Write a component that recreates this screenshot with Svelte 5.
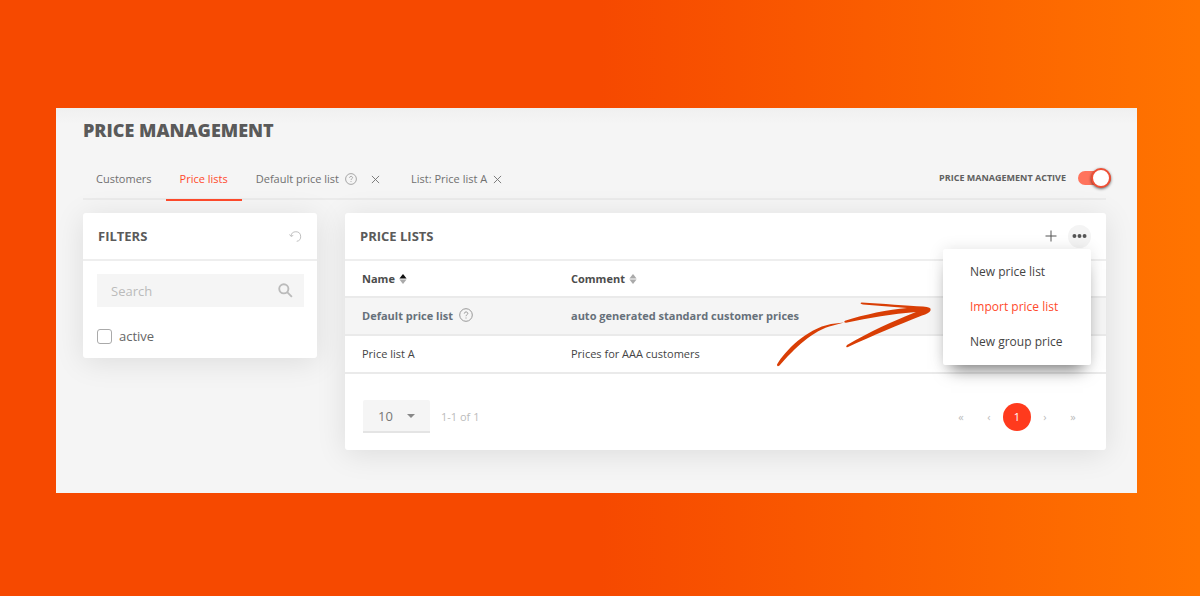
<script>
  const tabs = [
    { label: 'Customers' },
    { label: 'Price lists' },
    { label: 'Default price list', help: true, closable: true },
    { label: 'List: Price list A', closable: true },
  ];
  const menuItems = ['New price list', 'Import price list', 'New group price'];
  const rows = [
    { name: 'Default price list', comment: 'auto generated standard customer prices', standard: true },
    { name: 'Price list A', comment: 'Prices for AAA customers' },
  ];

  let activeTab = 1;
  let activeItem = 1;
  let menuOpen = true;
  let managementActive = true;
  let search = '';
  let onlyActive = false;
  let pageSize = 10;

  const resetFilters = () => {
    search = '';
    onlyActive = false;
  };
</script>

{#snippet helpIcon()}
  <svg class='help' viewBox='0 0 14 14' aria-hidden='true'>
    <circle cx='7' cy='7' r='6.3' />
    <path d='M5.3 5.6c0-2.2 3.5-2.2 3.5-.1 0 1.2-1.8 1.3-1.8 2.7M7 9.5v1' />
  </svg>
{/snippet}

{#snippet sortIcon(ascending)}
  <svg class='sort' class:ascending viewBox='0 0 8 10' aria-hidden='true'>
    <path class='up' d='M4 0l3.6 4.5H.4z' />
    <path class='down' d='M4 10l3.6-4.5H.4z' />
  </svg>
{/snippet}

<div class='backdrop'>
  <main class='panel'>
    <h1>PRICE MANAGEMENT</h1>

    <div class='toolbar'>
      <nav class='tabs'>
        {#each tabs as tab, i}
          <div class='tab' class:active={i === activeTab} class:helped={tab.help}>
            <button class='tab-label' on:click={() => activeTab = i}>
              {tab.label}
              {#if tab.help}{@render helpIcon()}{/if}
            </button>
            {#if tab.closable}
              <button class='close' aria-label='Close {tab.label}'>
                <svg viewBox='0 0 10 10'><path d='M1 1l8 8M9 1l-8 8' /></svg>
              </button>
            {/if}
          </div>
        {/each}
      </nav>
      <label class='switch'>
        <span>PRICE MANAGEMENT ACTIVE</span>
        <input type='checkbox' role='switch' bind:checked={managementActive} />
      </label>
    </div>

    <div class='content'>
      <section class='card'>
        <header>
          <h2>FILTERS</h2>
          <button class='reset' aria-label='Reset filters' on:click={resetFilters}>
            <svg viewBox='0 0 14 14'><path d='M2.2 6.6A5.2 5.2 0 1 1 8.3 12.2M.6 4.8l1.6 2.1 2.4-1.1' /></svg>
          </button>
        </header>
        <div class='filters'>
          <div class='search'>
            <input type='text' placeholder='Search' aria-label='Search' bind:value={search} />
            <svg viewBox='0 0 16 16' aria-hidden='true'><circle cx='6.2' cy='6.2' r='4.9' /><path d='M9.8 9.8l5 5' /></svg>
          </div>
          <label class='check'>
            <input type='checkbox' bind:checked={onlyActive} />
            active
          </label>
        </div>
      </section>

      <section class='card'>
        <header>
          <h2>PRICE LISTS</h2>
          <div class='actions'>
            <button class='round' aria-label='Add price list'>
              <svg class='plus' viewBox='0 0 12 12'><path d='M6 .5v11M.5 6h11' /></svg>
            </button>
            <button class='round more' aria-label='More' on:click={() => menuOpen = !menuOpen}>
              <svg class='dots' viewBox='0 0 16 6'><circle cx='2.6' cy='3' r='2.1' /><circle cx='8' cy='3' r='2.1' /><circle cx='13.4' cy='3' r='2.1' /></svg>
            </button>
            {#if menuOpen}
              <div class='menu'>
                {#each menuItems as item, i}
                  <button class:active={i === activeItem} on:click={() => activeItem = i}>{item}</button>
                {/each}
                <svg class='arrow' viewBox='0 0 160 70' aria-hidden='true'>
                  <path d='M0 62.500C8 49 29 27 54 22L67 20.500 56 23.500C36 28 17 47 2.500 63.500Q0 65.500 0 62.500Z' />
                  <path d='M68 18.800C87 12.500 112 7.500 130 6L86 2.600Q82 1.500 84.500 .5C105 1.500 131 4 146 4.600Q155 5 153.500 8.500Q152 11.500 145 13.500C122 22.500 95 34 71 45Q68 46 70 43C92 30 116 19 139 10C115 12 92 15.500 69 20.800Q66 20.500 68 18.800Z' />
                </svg>
              </div>
            {/if}
          </div>
        </header>
        <table>
          <thead>
            <tr>
              <th>Name {@render sortIcon(true)}</th>
              <th>Comment {@render sortIcon(false)}</th>
            </tr>
          </thead>
          <tbody>
            {#each rows as row}
              <tr class:standard={row.standard}>
                <td>{row.name} {#if row.standard}{@render helpIcon()}{/if}</td>
                <td>{row.comment}</td>
              </tr>
            {/each}
          </tbody>
        </table>
        <footer>
          <div class='page-size'>
            <div class='select'>
              <select aria-label='Rows per page' bind:value={pageSize}>
                <option value={10}>10</option>
                <option value={25}>25</option>
                <option value={50}>50</option>
              </select>
              <svg viewBox='0 0 8 4' aria-hidden='true'><path d='M0 0h8L4 4z' /></svg>
            </div>
            <span>1-1 of 1</span>
          </div>
          <nav class='pages'>
            <button aria-label='First page'>«</button>
            <button aria-label='Previous page'>‹</button>
            <button class='current'>1</button>
            <button aria-label='Next page'>›</button>
            <button aria-label='Last page'>»</button>
          </nav>
        </footer>
      </section>
    </div>
  </main>
</div>

<style>
  :global(body) {
    font-family: 'Open Sans', 'Noto Sans', sans-serif;
    font-size: 11px;
    line-height: 16px;
    color: #444;
  }

  button,
  input,
  select {
    font: inherit;
    color: inherit;
    border: 0;
    padding: 0;
    margin: 0;
    background: none;
  }

  button {
    cursor: pointer;
  }

  svg {
    display: block;
    fill: none;
    stroke: currentColor;
  }

  h1,
  h2 {
    margin: 0;
    color: #5a5a5a;
  }

  .backdrop {
    box-sizing: border-box;
    min-height: 100vh;
    padding: 108px 63px 103px 56px;
    background: linear-gradient(90deg, #f64900 50%, #ff7400 100%);
  }

  .panel {
    padding: 9px 31px 43px 27px;
    background: linear-gradient(#f0f0f0, #f5f5f5 16px);
  }

  h1 {
    font-size: 18px;
    font-weight: 800;
    line-height: 26px;
  }

  .toolbar {
    display: flex;
    justify-content: space-between;
    align-items: flex-start;
    margin-top: 16px;
    border-bottom: 2px solid #ebebeb;
  }

  .tabs {
    display: flex;
    margin-bottom: -3px;
  }

  .tab {
    display: flex;
    align-items: center;
    gap: 6px;
    height: 40px;
    padding: 0 14px;
    border-bottom: 2px solid transparent;
    color: #707070;
  }

  .tab:first-child {
    padding-left: 13px;
  }

  .tab.helped {
    gap: 14px;
    padding-right: 17px;
  }

  .tab.active {
    color: #ff4a2c;
    border-color: #ff4a2c;
  }

  .tab-label {
    display: flex;
    align-items: center;
    gap: 6px;
  }

  .close svg {
    width: 9px;
    height: 9px;
  }

  .help {
    width: 12px;
    height: 12px;
    color: #999;
  }

  .switch {
    display: flex;
    align-items: center;
    gap: 12px;
    height: 38px;
    margin-right: -5px;
    font-size: 9px;
    font-weight: 700;
    color: #606060;
  }

  .switch input {
    appearance: none;
    display: flex;
    align-items: center;
    width: 33px;
    height: 14px;
    border-radius: 7px;
    background: #bbb;
  }

  .switch input:checked {
    justify-content: flex-end;
    background: #ff735c;
  }

  .switch input::before {
    content: '';
    box-sizing: border-box;
    width: 20px;
    height: 20px;
    flex-shrink: 0;
    border: 2px solid #ef5036;
    border-radius: 50%;
    background: #fff;
    box-shadow: 0 1px 3px rgba(0, 0, 0, 0.6);
  }

  .content {
    display: grid;
    grid-template-columns: 234px 1fr;
    align-items: start;
    gap: 28px;
    margin-top: 13px;
  }

  .card {
    border-radius: 3px;
    background: #fff;
    box-shadow: 0 4px 30px rgba(0, 0, 0, 0.1);
  }

  header {
    display: flex;
    align-items: center;
    justify-content: space-between;
    height: 46px;
    padding: 0 15px;
    border-bottom: 2px solid #eee;
  }

  h2 {
    font-size: 13px;
    font-weight: 700;
  }

  .reset {
    color: #bbb;
  }

  .reset svg {
    width: 13px;
    height: 13px;
  }

  .filters {
    padding: 13px 13px 13px 14px;
  }

  .search {
    display: flex;
    align-items: center;
    height: 33px;
    padding: 0 11px 0 14px;
    background: #f5f5f5;
    color: #bbb;
    font-size: 13px;
  }

  .search input {
    flex: 1;
    min-width: 0;
    color: #555;
  }

  .search input::placeholder {
    color: #bbb;
  }

  .search svg {
    width: 15px;
    height: 15px;
    stroke-width: 2;
  }

  .check {
    display: flex;
    align-items: center;
    gap: 7px;
    height: 18px;
    margin-top: 20px;
    font-size: 13px;
    color: #666;
  }

  .check input {
    appearance: none;
    box-sizing: border-box;
    width: 15px;
    height: 15px;
    border: 1px solid #aaa;
    border-radius: 3px;
  }

  .check input:checked {
    background: #ff4a2c;
  }

  .actions {
    position: relative;
    display: flex;
    gap: 6px;
    color: #555;
  }

  .round {
    display: flex;
    align-items: center;
    justify-content: center;
    width: 23px;
    height: 23px;
    border-radius: 50%;
  }

  .more {
    background: #f4f4f4;
  }

  .plus {
    width: 12px;
    height: 12px;
  }

  .dots {
    width: 15px;
    height: 6px;
    fill: currentColor;
    stroke: none;
  }

  .menu {
    position: absolute;
    top: 24px;
    right: 0;
    z-index: 1;
    display: flex;
    flex-direction: column;
    width: 148px;
    padding: 6px 0 5px;
    border-radius: 2px;
    background: #fff;
    box-shadow: 0 0 16px rgba(0, 0, 0, 0.1), 0 12px 16px -8px rgba(0, 0, 0, 0.5);
  }

  .menu button {
    height: 35px;
    padding: 0 27px;
    font-size: 12px;
    text-align: left;
    color: #444;
  }

  .menu button.active {
    color: #ff4a2c;
  }

  .arrow {
    position: absolute;
    top: 53px;
    right: 154px;
    width: 160px;
    height: 70px;
    fill: #d93e05;
    stroke: none;
    pointer-events: none;
  }

  table {
    width: 100%;
    border-collapse: collapse;
    table-layout: fixed;
  }

  th,
  td {
    box-sizing: border-box;
    height: 38px;
    padding: 0 0 0 17px;
    border-bottom: 2px solid #eaeaea;
    text-align: left;
  }

  th {
    height: 36px;
    color: #4c4c4c;
  }

  th:first-child {
    width: 209px;
  }

  .standard {
    background: #f5f5f5;
    color: #66707a;
    font-weight: 700;
  }

  td .help {
    display: inline-block;
    width: 14px;
    height: 14px;
    margin-left: 3px;
    vertical-align: -2px;
  }

  .sort {
    display: inline-block;
    width: 8px;
    height: 10px;
    margin-left: 1px;
    vertical-align: -1px;
    fill: #aaa;
    stroke: none;
  }

  .ascending .up {
    fill: #111;
  }

  footer {
    display: flex;
    align-items: center;
    justify-content: space-between;
    height: 33px;
    padding: 26px 19px 17px 18px;
    color: #bbb;
  }

  .page-size {
    display: flex;
    align-items: center;
    gap: 11px;
  }

  .select {
    display: grid;
    align-items: center;
    border-bottom: 2px solid #e4e4e4;
    border-radius: 2px 2px 0 0;
    background: #f5f5f5;
    color: #777;
    font-size: 13px;
  }

  .select select,
  .select svg {
    grid-area: 1 / 1;
  }

  .select select {
    appearance: none;
    width: 67px;
    height: 31px;
    padding-left: 15px;
  }

  .select svg {
    justify-self: end;
    width: 8px;
    height: 4px;
    margin-right: 15px;
    fill: #888;
    stroke: none;
    pointer-events: none;
  }

  .pages {
    display: flex;
  }

  .pages button {
    width: 28px;
    height: 28px;
    border-radius: 50%;
  }

  .pages .current {
    background: #ff3a1d;
    color: #fff;
  }
</style>
